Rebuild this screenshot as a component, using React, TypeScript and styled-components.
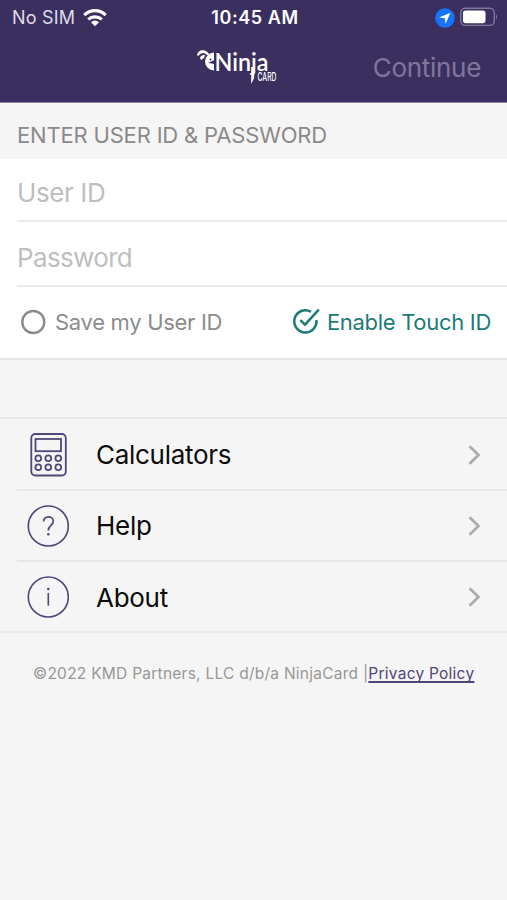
import React from "react";
import styled, { createGlobalStyle } from "styled-components";

const Global = createGlobalStyle`
  * { box-sizing: border-box; }
  body { margin: 0; background: #f5f5f5; font-family: Inter, "Liberation Sans", sans-serif; }
`;

const Screen = styled.div`
  width: 507px;
  height: 900px;
  display: flex;
  flex-direction: column;
  background: #f5f5f5;
  overflow: hidden;
`;

const Header = styled.header`
  height: 103px;
  flex: none;
  background: #3b2f60;
  border-bottom: 1px solid #8d86a1;
`;

const StatusBar = styled.div`
  height: 35px;
  display: grid;
  grid-template-columns: 1fr auto 1fr;
  align-items: center;
  padding: 0 9px 0 12px;
`;

const Carrier = styled.div`
  display: flex;
  align-items: center;
  gap: 8px;
  color: #dedbe7;
  font-size: 18px;
  letter-spacing: 0.2px;
`;

const Clock = styled.div`
  color: #fff;
  font-size: 18px;
  font-weight: 600;
  letter-spacing: 0.6px;
`;

const Indicators = styled.div`
  display: flex;
  align-items: center;
  justify-content: flex-end;
  gap: 5px;
`;

const NavBar = styled.div`
  height: 67px;
  display: grid;
  grid-template-columns: 1fr 88px 1fr;
  align-items: center;
  padding: 0 26px;
`;

const LogoSlot = styled.div`
  grid-column: 2;
  display: flex;
  margin: 0 0 0 -14px;
`;

const Continue = styled.button`
  grid-column: 3;
  justify-self: end;
  padding: 0;
  border: 0;
  background: none;
  color: #7f779b;
  font: 26px/32px Inter, sans-serif;
  letter-spacing: -0.3px;
  margin-top: -1px;
`;

const SectionTitle = styled.h2`
  height: 56px;
  flex: none;
  margin: 0;
  padding: 7px 17px 0;
  display: flex;
  align-items: center;
  color: #8a8a8a;
  font-size: 22px;
  font-weight: 400;
  letter-spacing: -0.18px;
`;

const Form = styled.form`
  flex: none;
  height: 201px;
  background: #fff;
  border-bottom: 2px solid #e5e5e5;
`;

const Field = styled.input<{ $height: number; $spacing: number; $drop: number }>`
  display: block;
  width: 490px;
  height: ${(p) => p.$height}px;
  margin-left: 17px;
  padding: ${(p) => p.$drop}px 0 0;
  border: 0;
  border-bottom: 2px solid #ebebeb;
  border-radius: 0;
  outline: 0;
  background: none;
  font: 26px Inter, sans-serif;
  letter-spacing: ${(p) => p.$spacing}px;
  &::placeholder { color: #bebebe; opacity: 1; }
`;

const Options = styled.div`
  height: 71px;
  display: flex;
  justify-content: space-between;
  align-items: center;
  padding: 0 16px 1px 20px;
`;

const Option = styled.label<{ $on?: boolean }>`
  display: flex;
  align-items: center;
  gap: 7px;
  color: ${(p) => (p.$on ? "#1c7b78" : "#8c8c8c")};
  font-size: 22px;
  letter-spacing: -0.3px;
`;

const Menu = styled.nav`
  flex: none;
  margin-top: 57px;
  border-top: 2px solid #e8e8e8;
  border-bottom: 2px solid #e8e8e8;
`;

const MenuItem = styled.a`
  height: 71px;
  margin-left: 17px;
  padding: 0 26px 0 10px;
  display: grid;
  grid-template-columns: 69px 1fr 14px;
  align-items: center;
  color: #0b0b0b;
  font-size: 26px;
  letter-spacing: -0.28px;
  &:not(:last-child) { border-bottom: 2px solid #e8e8e8; }
  &:first-child { height: 72px; padding-top: 1px; }
  &:last-child { height: 69px; padding-top: 1px; }
`;

const Footer = styled.footer`
  margin: 31px 0 0 33px;
  color: #979797;
  font-size: 15.5px;
  line-height: 20px;
  letter-spacing: 0.25px;
  white-space: nowrap;
`;

const Policy = styled.a`
  color: #51467a;
  text-decoration: underline;
  text-decoration-thickness: 1.5px;
  text-underline-offset: 2px;
  text-decoration-skip-ink: none;
`;

const Wifi = () => (
  <svg width="24" height="18" viewBox="0 0 24 18" fill="none" stroke="#fff" strokeWidth="3.2">
    <path d="M1.3 6.2C7.3.2 16.7.2 22.7 6.2M5.2 10.4C9 6.9 15 6.9 18.8 10.4" />
    <path d="M8 13.2Q12 9.9 16 13.2L12 17.2Z" fill="#fff" stroke="none" />
  </svg>
);

const Location = () => (
  <svg width="20" height="20" viewBox="0 0 20 20">
    <circle cx="10" cy="10" r="9.8" fill="#1473f8" />
    <path d="M15.4 4.8 4 9.5l5.8.8.8 5.6Z" fill="#fff" />
  </svg>
);

const Battery = () => (
  <svg width="38" height="19" viewBox="0 0 38 19" overflow="visible">
    <rect x="0.8" y="0.2" width="33.5" height="17.2" rx="4.5" fill="none" stroke="#81799c" strokeWidth="1.4" />
    <rect x="3" y="2.4" width="22.5" height="12.8" rx="2.6" fill="#fff" />
    <path d="M36 6q2 2.9 0 5.8Z" fill="#81799c" />
  </svg>
);

const Logo = () => (
  <svg width="88" height="44" viewBox="0 0 88 44" overflow="visible">
    <g fill="#fff">
      <path d="M1 8Q2 3 7 3.3Q11 3.5 13.5 7.5L11 8Q8 5 5 6.5L2 9Z" />
      <path d="M4 11q1-3.5 5-3L8 11l-3 2Z" />
      <path d="M18 5.5A9 9 0 0 0 18 23.5V17l-6-1.2 6-2.5Z" />
      <path d="M55.2 20h3v11l-3 6Z" />
    </g>
    <circle cx="14.5" cy="12.4" r="1" fill="#3b2f60" />
    <text x="18.5" y="24" textLength="54" lengthAdjust="spacingAndGlyphs" fill="#fff" fontFamily="Lato, sans-serif" fontWeight="600" fontSize="24">Ninja</text>
    <text x="61.5" y="34" textLength="19" lengthAdjust="spacingAndGlyphs" fill="#fff" fontFamily="Inter, sans-serif" fontWeight="500" fontSize="11.5">CARD</text>
  </svg>
);

const Unchecked = () => (
  <svg width="28" height="28" viewBox="0 0 28 28" fill="none" stroke="#8a8a8a" strokeWidth="2.4">
    <circle cx="13.3" cy="14" r="11" />
  </svg>
);

const Checked = () => (
  <svg width="28" height="28" viewBox="0 0 28 28" fill="none" stroke="#1c7b78" strokeWidth="2.5">
    <path d="M19 3.8A11.1 11.1 0 1 0 24.4 12" />
    <path d="m8.3 12.2 4.7 4.5L26.8 1.7" />
  </svg>
);

const Calculator = () => (
  <svg width="42" height="44" viewBox="0 0 42 44" fill="none" stroke="#51467a" strokeWidth="1.8">
    <rect x="4.3" y="1" width="34.5" height="41.5" rx="4" />
    <rect x="8.5" y="6" width="25.5" height="12.2" />
    {[11.3, 21.3, 31.3].flatMap((x) => [25.2, 34.3].map((y) => <circle key={`${x}-${y}`} cx={x} cy={y} r="2.9" />))}
  </svg>
);

const Help = () => (
  <svg width="42" height="42" viewBox="0 0 42 42" fill="none" stroke="#51467a" strokeWidth="1.6">
    <circle cx="21.3" cy="21" r="20" />
    <path d="M16.6 16.5c0-6.2 9.7-6.2 9.7-.4 0 4.6-5 4-5 9.5" strokeWidth="1.7" />
    <circle cx="21.3" cy="29.2" r="1.3" fill="#51467a" stroke="none" />
  </svg>
);

const Info = () => (
  <svg width="42" height="42" viewBox="0 0 42 42" fill="none" stroke="#51467a" strokeWidth="1.6">
    <circle cx="21.3" cy="21" r="20" />
    <path d="M21.3 17v12.7" />
    <circle cx="21.3" cy="13" r="1.3" fill="#51467a" stroke="none" />
  </svg>
);

const Chevron = () => (
  <svg width="14" height="20" viewBox="0 0 14 20" fill="none" stroke="#ababab" strokeWidth="2.7">
    <path d="m2.5 1.2 9 8.8-9 8.8" />
  </svg>
);

const items = [
  { label: "Calculators", Icon: Calculator },
  { label: "Help", Icon: Help },
  { label: "About", Icon: Info },
];

export default function App() {
  return (
    <Screen>
      <Global />
      <Header>
        <StatusBar>
          <Carrier>No SIM <Wifi /></Carrier>
          <Clock>10:45 AM</Clock>
          <Indicators><Location /><Battery /></Indicators>
        </StatusBar>
        <NavBar>
          <LogoSlot><Logo /></LogoSlot>
          <Continue>Continue</Continue>
        </NavBar>
      </Header>
      <SectionTitle>ENTER USER ID &amp; PASSWORD</SectionTitle>
      <Form>
        <Field $height={63} $spacing={-0.4} $drop={6} placeholder="User ID" />
        <Field $height={65} $spacing={-0.65} $drop={8} placeholder="Password" type="password" />
        <Options>
          <Option><Unchecked />Save my User ID</Option>
          <Option $on><Checked />Enable Touch ID</Option>
        </Options>
      </Form>
      <Menu>
        {items.map(({ label, Icon }) => (
          <MenuItem key={label}><Icon /><span>{label}</span><Chevron /></MenuItem>
        ))}
      </Menu>
      <Footer>©2022 KMD Partners, LLC d/b/a NinjaCard |<Policy>Privacy Policy</Policy></Footer>
    </Screen>
  );
}
